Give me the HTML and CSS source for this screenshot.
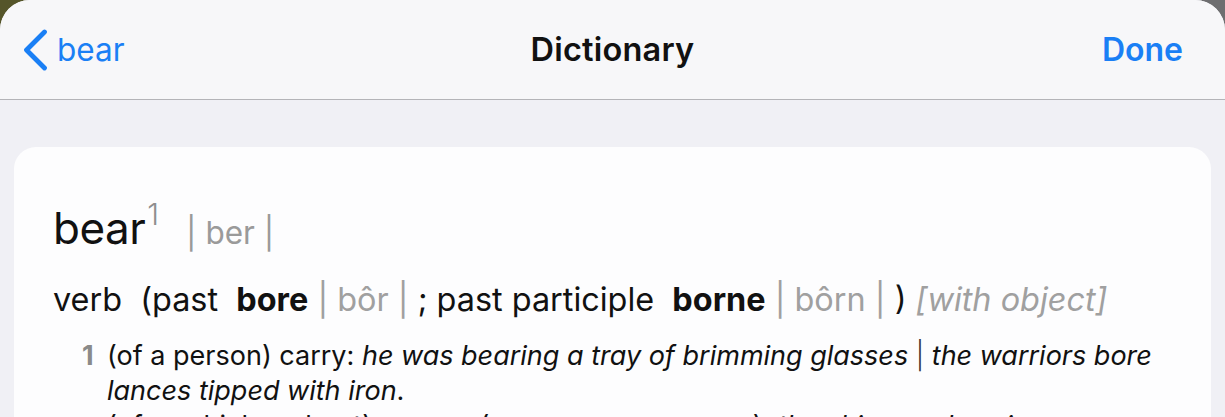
FILE: index.html
```html
<!DOCTYPE html>
<html>
<head>
<meta charset="utf-8">
<link rel="stylesheet" href="styles.css">
</head>
<body>
<div class="screen">
  <div class="sheet">
    <header class="nav">
      <a class="back">
        <svg class="chev" width="26" height="42" viewBox="0 0 26 42"><path d="M22.5 3 L4.5 21 L22.5 39" fill="none" stroke="#1a7ff5" stroke-width="4.8" stroke-linecap="round" stroke-linejoin="round"/></svg>
        <span>bear</span>
      </a>
      <h1 class="title">Dictionary</h1>
      <a class="done">Done</a>
    </header>
    <main class="content">
      <section class="card">
        <div class="head"><span class="hw">bear</span><sup class="hn">1</sup><span class="pron">| ber |</span></div>
        <div class="gram">verb&nbsp; (past&nbsp; <b>bore</b> <span class="g">| bôr |</span> ; past participle&nbsp; <b>borne</b> <span class="g">| bôrn |</span> ) <i class="g">[with object]</i></div>
        <div class="sense"><span class="num">1</span><span class="def">(of a person) carry: <i>he was bearing a tray of brimming glasses</i> <span class="bar">|</span> <i>the warriors bore lances tipped with iron</i>.</span></div>
        <div class="sense sub"><span class="num">•</span><span class="def">(of a vehicle or boat) convey (passengers or cargo): <i>the ship was bearing a cargo of oil</i></span></div>
      </section>
    </main>
  </div>
</div>
</body>
</html>
```
FILE: styles.css
```css
html, body { margin: 0; padding: 0; }
body {
  width: 1225px; height: 417px; overflow: hidden;
  background: #6e6e6e;
  font-family: Inter, "Noto Sans", sans-serif;
}
.screen {
  height: 417px;
  background: linear-gradient(90deg, #55552a 0, #55552a 50%, #6e6e70 50%);
}
.sheet {
  height: 417px;
  background: #f0f0f5;
  border-radius: 30px 30px 0 0;
  overflow: hidden;
  display: flex; flex-direction: column;
}
.nav {
  height: 99px;
  flex: none;
  background: #f7f7f9;
  border-bottom: 1px solid #b4b4b8;
  display: grid;
  grid-template-columns: 1fr auto 1fr;
  align-items: center;
  padding: 0 22px;
}
.back { display: flex; align-items: center; gap: 9px; color: #1a7ff5; font-size: 31.5px; }
.back span { margin-top: -1px; }
.chev { display: block; }
.title { margin: 0; font-size: 32.5px; font-weight: 600; color: #111; letter-spacing: 0.2px; }
.done { justify-self: end; margin-right: 20px; color: #1a7ff5; font-size: 32px; font-weight: 600; }
.content { padding: 47px 14px 0 14px; }
.card {
  background: #fdfdfe;
  border-radius: 22px;
  padding: 55px 40px 0 39px;
  height: 400px;
}
.head { display: flex; align-items: baseline; color: #111; height: 52px; line-height: 52px; }
.hw { font-size: 44px; letter-spacing: -0.5px; }
.hn { font-size: 30px; line-height: 30px; color: #8e8e8e; align-self: flex-start; margin: -3px 0 0 2px; font-weight: 300; }
.pron { font-size: 31.5px; color: #9a9a9a; margin-left: 27px; }
.gram { margin-top: 26px; font-size: 32.4px; color: #111; line-height: 40px; white-space: nowrap; }
.gram b { font-weight: 700; }
.g { color: #a0a0a0; font-weight: 400; }
.gram i.g { font-style: italic; }
.sense { display: flex; margin-top: 18px; font-size: 27px; line-height: 35px; color: #111; padding-left: 29px; }
.num { color: #8a8a8a; font-weight: 700; width: 25px; flex: none; }
.def i { font-style: italic; }
.bar { font-weight: 300; color: #333; }
.sub { margin-top: 0; }
.sub .num { color: #111; font-weight: 400; }
```
